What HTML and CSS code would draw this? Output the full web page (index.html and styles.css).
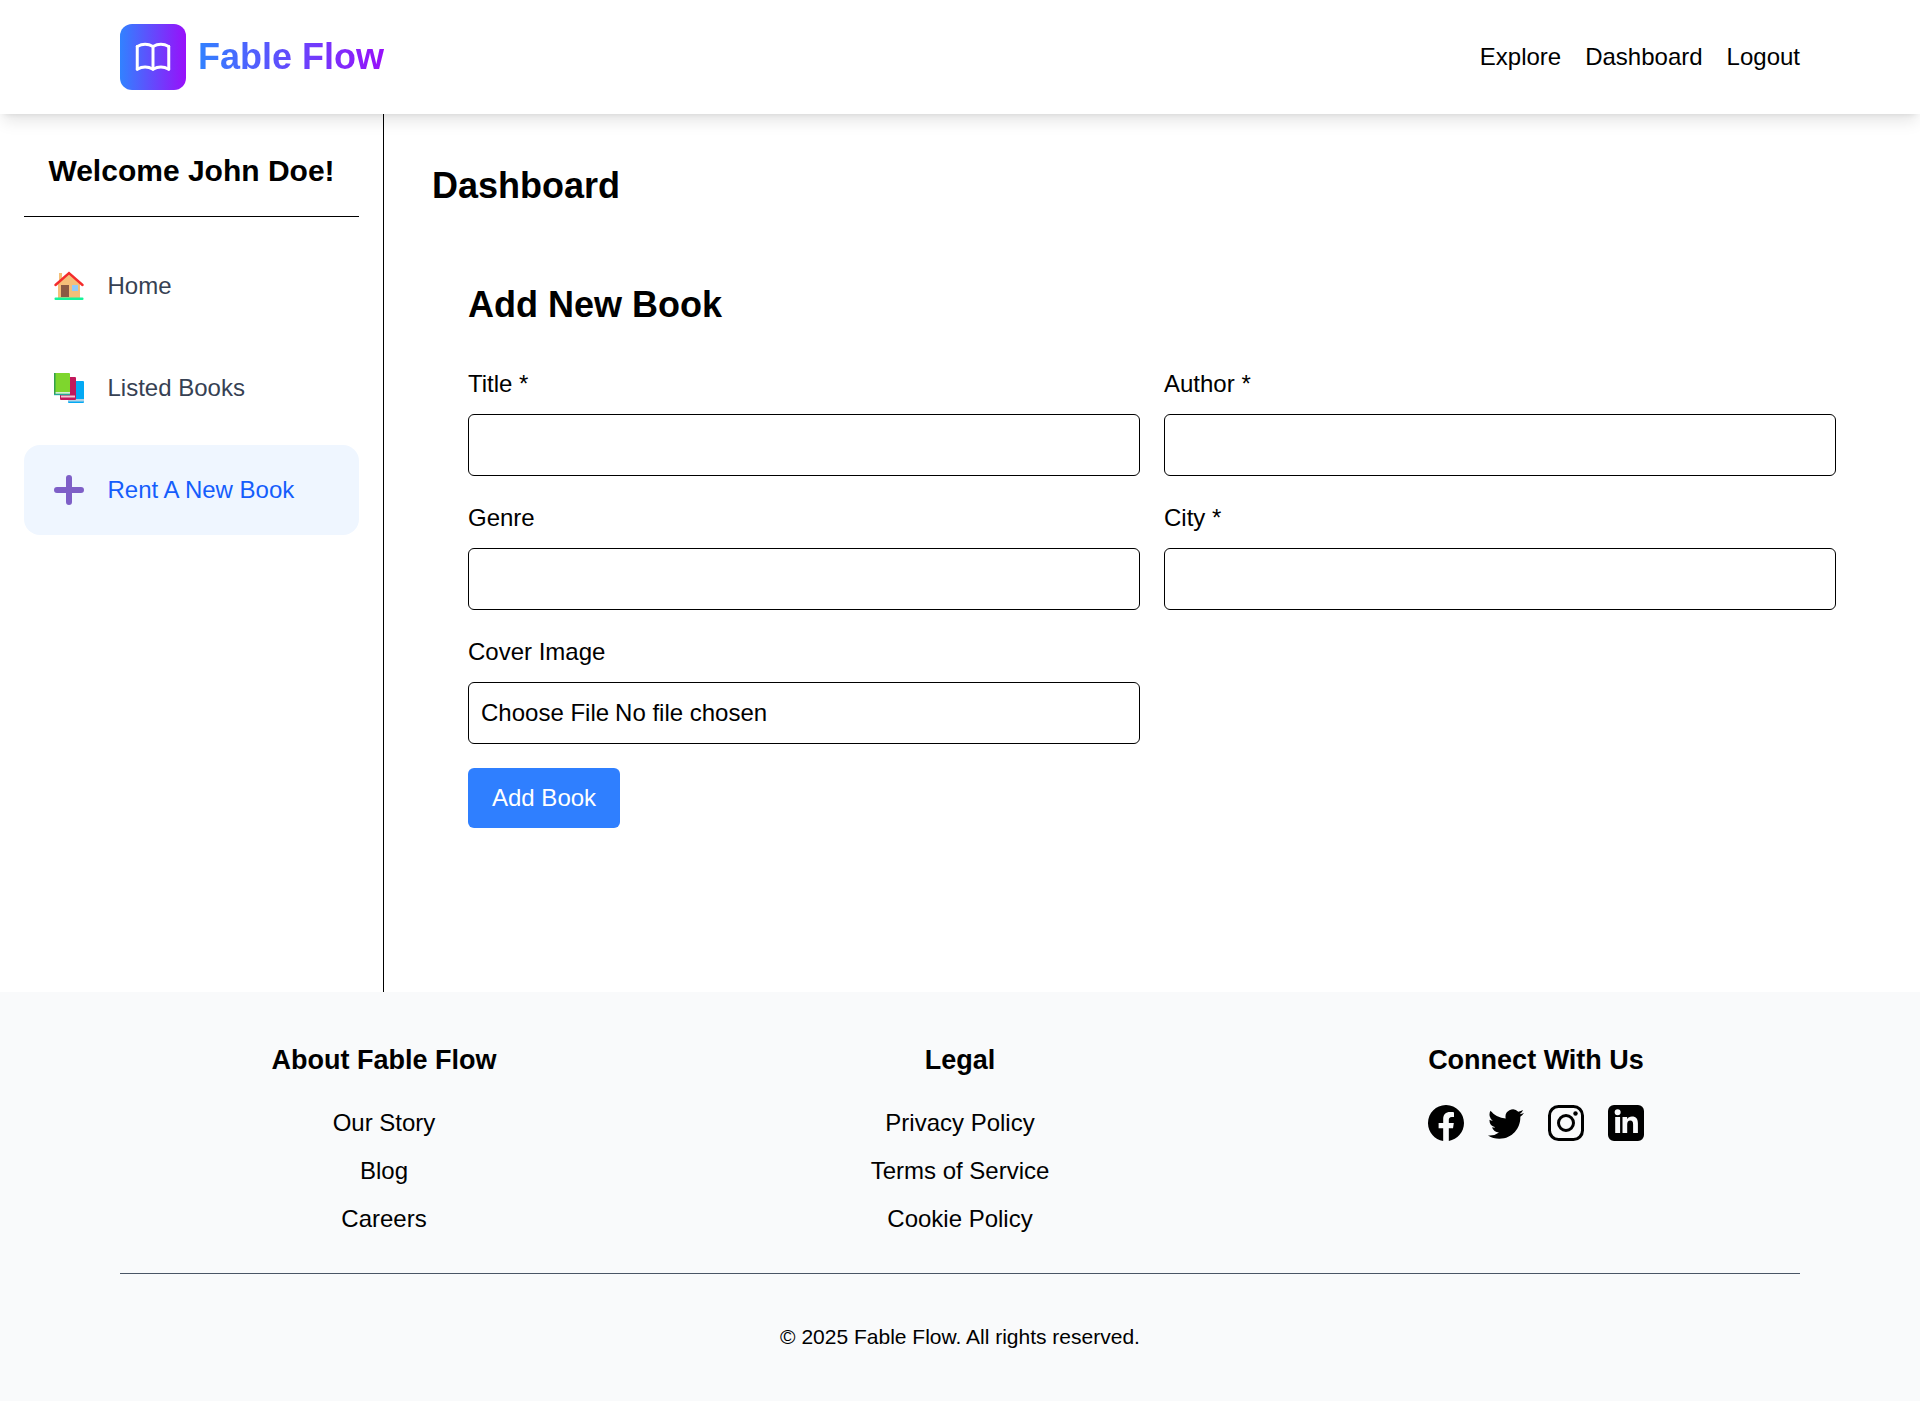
FILE: index.html
```html
<!DOCTYPE html>
<html lang="en">
<head>
    <meta charset="UTF-8">
    <meta name="viewport" content="width=device-width, initial-scale=1.0">
    <title>Fable Flow - Dashboard</title>
    <link rel="stylesheet" href="styles.css">
</head>
<body>
    <header class="site-header">
        <a class="brand" href="#">
            <span class="brand-icon">
                <svg viewBox="0 0 24 24" width="42" height="42" fill="none" stroke="#fff" stroke-width="1.7" stroke-linecap="round" stroke-linejoin="round">
                    <path d="M3 19a9 9 0 0 1 9 0a9 9 0 0 1 9 0"/>
                    <path d="M3 6a9 9 0 0 1 9 0a9 9 0 0 1 9 0"/>
                    <path d="M3 6v13M12 6v13M21 6v13"/>
                </svg>
            </span>
            <span class="brand-name">Fable Flow</span>
        </a>
        <nav class="top-nav">
            <a href="#">Explore</a>
            <a href="#">Dashboard</a>
            <a href="#">Logout</a>
        </nav>
    </header>

    <div class="layout">
        <aside class="sidebar">
            <h2 class="welcome">Welcome John Doe!</h2>
            <ul class="side-menu">
                <li>
                    <a class="side-link" href="#">
                        <svg class="side-icon" viewBox="0 0 30 30">
                            <rect x="5" y="2" width="3" height="8" fill="#f4bf79"/>
                            <path d="M4 12 15 2 26 12V28H4Z" fill="#f4bf79"/>
                            <rect x="7" y="14" width="8" height="12" fill="#8a5a44"/>
                            <rect x="18" y="14" width="6" height="6" fill="#90caf9"/>
                            <path d="M1.5 14 15 2 28.5 14" fill="none" stroke="#f42c2c" stroke-width="2.4" stroke-linecap="round"/>
                            <rect x="0.5" y="26.5" width="29" height="2.5" rx="1" fill="#14f59a"/>
                        </svg>
                        <span>Home</span>
                    </a>
                </li>
                <li>
                    <a class="side-link" href="#">
                        <svg class="side-icon" viewBox="0 0 30 30">
                            <rect x="14" y="8" width="16" height="22" rx="1" fill="#03a9f4"/>
                            <rect x="14" y="26" width="16" height="2.5" fill="#b3d4e6"/>
                            <rect x="6" y="4" width="16" height="23" rx="1" fill="#c2185b"/>
                            <rect x="7" y="22.5" width="14" height="2" fill="#f2c6d4"/>
                            <rect x="0" y="0" width="16" height="21" rx="1" fill="#7ed62d"/>
                            <rect x="0" y="19" width="16" height="1.8" fill="#d3f0d8"/>
                            <rect x="0" y="20.8" width="16" height="1.4" fill="#26a69a"/>
                            <rect x="0" y="0" width="1.5" height="21" fill="#33a04a"/>
                        </svg>
                        <span>Listed Books</span>
                    </a>
                </li>
                <li>
                    <a class="side-link active" href="#">
                        <svg class="side-icon" viewBox="0 0 30 30">
                            <path d="M15 3v24M3 15h24" fill="none" stroke="#7e5fc7" stroke-width="6" stroke-linecap="round"/>
                        </svg>
                        <span>Rent A New Book</span>
                    </a>
                </li>
            </ul>
        </aside>

        <main class="main">
            <h1 class="page-title">Dashboard</h1>
            <section class="book-form">
                <h2 class="form-title">Add New Book</h2>
                <form>
                    <div class="form-grid">
                        <div class="form-group">
                            <label for="title">Title *</label>
                            <input type="text" id="title">
                        </div>
                        <div class="form-group">
                            <label for="author">Author *</label>
                            <input type="text" id="author">
                        </div>
                        <div class="form-group">
                            <label for="genre">Genre</label>
                            <input type="text" id="genre">
                        </div>
                        <div class="form-group">
                            <label for="city">City *</label>
                            <input type="text" id="city">
                        </div>
                        <div class="form-group">
                            <label for="cover">Cover Image</label>
                            <input type="file" id="cover">
                        </div>
                    </div>
                    <button type="button" class="submit-btn">Add Book</button>
                </form>
            </section>
        </main>
    </div>

    <footer class="site-footer">
        <div class="footer-columns">
            <div class="footer-col">
                <h3>About Fable Flow</h3>
                <a href="#">Our Story</a>
                <a href="#">Blog</a>
                <a href="#">Careers</a>
            </div>
            <div class="footer-col">
                <h3>Legal</h3>
                <a href="#">Privacy Policy</a>
                <a href="#">Terms of Service</a>
                <a href="#">Cookie Policy</a>
            </div>
            <div class="footer-col">
                <h3>Connect With Us</h3>
                <div class="social">
                    <a href="#" aria-label="Facebook">
                        <svg viewBox="0 0 16 16" width="36" height="36"><path d="M16 8.049c0-4.446-3.582-8.05-8-8.05C3.58 0-.002 3.603-.002 8.05c0 4.017 2.926 7.347 6.75 7.951v-5.625h-2.03V8.05H6.75V6.275c0-2.017 1.195-3.131 3.022-3.131.876 0 1.791.157 1.791.157v1.98h-1.009c-.993 0-1.303.621-1.303 1.258v1.51h2.218l-.354 2.326H9.25V16c3.824-.604 6.75-3.934 6.75-7.951"/></svg>
                    </a>
                    <a href="#" aria-label="Twitter">
                        <svg viewBox="0 0 16 16" width="36" height="36"><path d="M5.026 15c6.038 0 9.341-5.003 9.341-9.334q.002-.211-.006-.422A6.7 6.7 0 0 0 16 3.542a6.7 6.7 0 0 1-1.889.518 3.3 3.3 0 0 0 1.447-1.817 6.5 6.5 0 0 1-2.087.793A3.286 3.286 0 0 0 7.875 6.03a9.32 9.32 0 0 1-6.767-3.429 3.29 3.29 0 0 0 1.018 4.382A3.3 3.3 0 0 1 .64 6.575v.045a3.29 3.29 0 0 0 2.632 3.218 3.2 3.2 0 0 1-.865.115 3 3 0 0 1-.614-.057 3.28 3.28 0 0 0 3.067 2.277A6.6 6.6 0 0 1 .78 13.58a6 6 0 0 1-.78-.045A9.34 9.34 0 0 0 5.026 15"/></svg>
                    </a>
                    <a href="#" aria-label="Instagram">
                        <svg viewBox="0 0 36 36" width="36" height="36" fill="none" stroke="#000">
                            <rect x="1.5" y="1.5" width="33" height="33" rx="9" stroke-width="3"/>
                            <circle cx="18" cy="18" r="7.5" stroke-width="3"/>
                            <circle cx="27.5" cy="8.5" r="2.2" fill="#000" stroke="none"/>
                        </svg>
                    </a>
                    <a href="#" aria-label="LinkedIn">
                        <svg viewBox="0 0 36 36" width="36" height="36"><path fill-rule="evenodd" d="M6 0H30A6 6 0 0 1 36 6V30A6 6 0 0 1 30 36H6A6 6 0 0 1 0 30V6A6 6 0 0 1 6 0ZM7.2 12V28H12.1V12ZM9.65 4.3a3 3 0 1 0 0 6a3 3 0 1 0 0-6ZM14.5 12V28H19.2V19.3C19.2 17 20.2 15.6 22.3 15.6C24.3 15.6 25.1 16.9 25.1 19.3V28H29.9V18.4C29.9 14.2 28.2 11.6 24 11.6C21.7 11.6 20 12.7 19.1 14.2V12Z"/></svg>
                    </a>
                </div>
            </div>
        </div>
        <p class="copyright">&copy; 2025 Fable Flow. All rights reserved.</p>
    </footer>
</body>
</html>
```

FILE: styles.css
```css
* {
    box-sizing: border-box;
}
body {
    margin: 0;
    min-height: 100vh;
    display: flex;
    flex-direction: column;
    font-family: "Liberation Sans", Arial, sans-serif;
    font-size: 24px;
    color: #000;
    background-color: #fff;
}
a {
    color: inherit;
    text-decoration: none;
}

/* Header */
.site-header {
    height: 114px;
    padding: 0 120px;
    display: flex;
    align-items: center;
    justify-content: space-between;
    background-color: #fff;
    box-shadow: 0 10px 15px -3px rgba(0, 0, 0, 0.1), 0 4px 6px -4px rgba(0, 0, 0, 0.1);
    position: relative;
    z-index: 1;
}
.brand {
    display: flex;
    align-items: center;
    gap: 12px;
}
.brand-icon {
    width: 66px;
    height: 66px;
    border-radius: 12px;
    display: flex;
    align-items: center;
    justify-content: center;
    background: linear-gradient(to right, #3182ff, #9810fa);
}
.brand-name {
    font-size: 36px;
    font-weight: bold;
    background: linear-gradient(to right, #3182ff, #9810fa);
    -webkit-background-clip: text;
    background-clip: text;
    color: transparent;
}
.top-nav {
    display: flex;
    gap: 24px;
}

/* Sidebar + main */
.layout {
    flex: 1;
    display: flex;
}
.sidebar {
    flex: 0 0 384px;
    padding: 24px;
    border-right: 1px solid #000;
}
.welcome {
    margin: 0 0 24px;
    padding: 16px 0 28px;
    font-size: 30px;
    text-align: center;
    border-bottom: 1px solid #000;
}
.side-menu {
    list-style: none;
    margin: 0;
    padding: 0;
    display: flex;
    flex-direction: column;
    gap: 12px;
}
.side-link {
    height: 90px;
    padding: 0 30px;
    display: flex;
    align-items: center;
    gap: 23.5px;
    color: #364153;
    border-radius: 16px;
}
.side-link.active {
    color: #155dfc;
    background-color: #eff6ff;
}
.side-icon {
    width: 30px;
    height: 30px;
}
.main {
    flex: 1;
    padding: 48px;
}
.page-title {
    margin: 0 0 33px;
    font-size: 36px;
    line-height: 47px;
}
.book-form {
    padding: 36px;
}
.form-title {
    margin: 0 0 34px;
    font-size: 36px;
    line-height: 54px;
}
.form-grid {
    display: grid;
    grid-template-columns: 1fr 1fr;
    gap: 24px;
}
.form-group label {
    display: block;
    margin-bottom: 12px;
    line-height: 36px;
}
.form-group input {
    display: block;
    width: 100%;
    height: 62px;
    padding: 12px;
    font-family: inherit;
    font-size: 24px;
    border: 1px solid #000;
    border-radius: 6px;
    background-color: #fff;
}
.form-group input[type="file"] {
    padding: 16px 12px 0;
}
input[type="file"]::file-selector-button {
    margin: 0 6px 0 0;
    padding: 0;
    border: none;
    background: none;
    font: inherit;
    color: #000;
}
.submit-btn {
    display: block;
    margin-top: 24px;
    padding: 12px 24px;
    height: 60px;
    font-family: inherit;
    font-size: 24px;
    color: #fff;
    background-color: #2f7fff;
    border: none;
    border-radius: 6px;
}

/* Footer */
.site-footer {
    height: 409px;
    padding: 52px 120px 0;
    background-color: #f9fafb;
}
.footer-columns {
    display: grid;
    grid-template-columns: repeat(3, 1fr);
    gap: 48px;
    padding-bottom: 36px;
    border-bottom: 1px solid #4a5565;
}
.footer-col {
    display: flex;
    flex-direction: column;
    align-items: center;
}
.footer-col h3 {
    margin: 0 0 29px;
    font-size: 27px;
    line-height: 32px;
}
.footer-col > a {
    line-height: 36px;
    margin-bottom: 12px;
}
.footer-col > a:last-child {
    margin-bottom: 0;
}
.social {
    display: flex;
    gap: 24px;
}
.social a {
    display: block;
    height: 36px;
}
.copyright {
    margin: 48px 0 0;
    font-size: 21px;
    line-height: 30px;
    text-align: center;
}
```
